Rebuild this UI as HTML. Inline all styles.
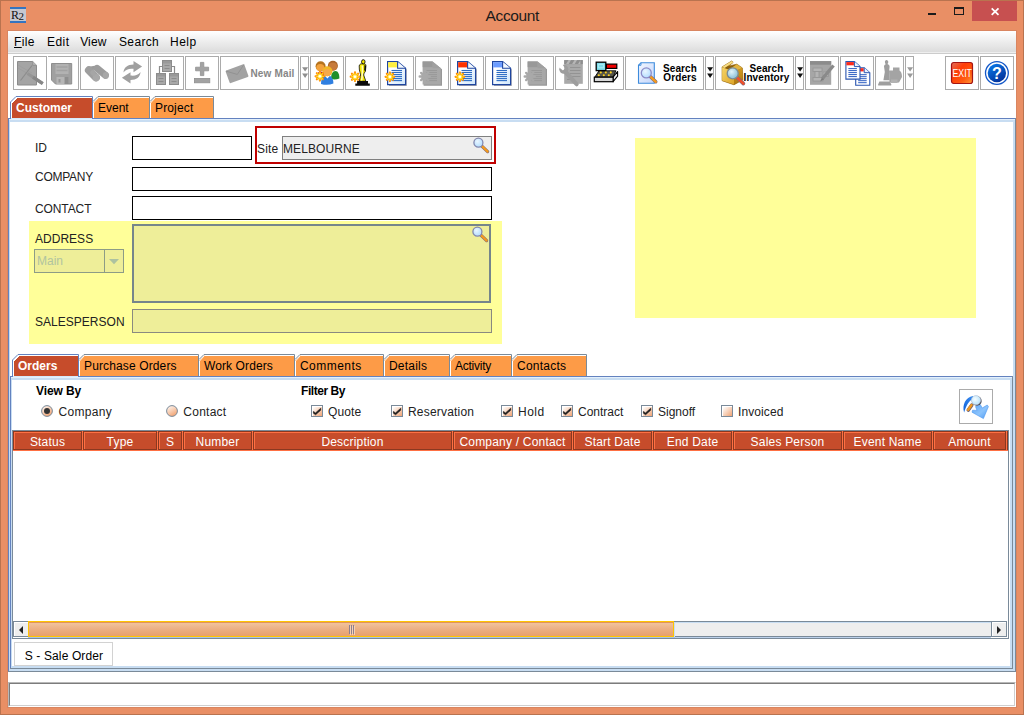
<!DOCTYPE html>
<html lang="en"><head><meta charset="utf-8"><title>Account</title>
<style>
html,body{margin:0;padding:0}
body{width:1024px;height:715px;overflow:hidden;position:relative;background:#E98F65;
 font-family:"Liberation Sans",sans-serif;font-size:12px;color:#000}
div,span,svg{position:absolute;box-sizing:border-box}
.t{white-space:nowrap;display:block}
.b{font-weight:bold}
.w{color:#fff}
.tb{border:1px solid #ABABAB;background:#fff}
svg{overflow:visible}
.hc{background:#C64C2B;border:1px solid #8A3820;box-shadow:inset 1px 1px 0 #FF7043;color:#fff;text-align:center;line-height:21px;font-size:12px;letter-spacing:0.2px;white-space:nowrap;overflow:hidden}
</style></head><body>

<div style="left:0px;top:0px;width:1024px;height:715px;border:1px solid #B9734F"></div>
<div style="left:7px;top:30px;width:1010px;height:678px;background:#D98560"></div>
<div style="left:8px;top:31px;width:1008px;height:676px;background:#fff"></div>
<div style="left:10px;top:7px;width:16px;height:16px;background:#C6C8D0;border-top:2px solid #3474C0;border-bottom:2px solid #3474C0;overflow:hidden"><span class="t" style="left:1px;top:-1px;font-family:'Liberation Serif',serif;font-size:12px;line-height:14px;letter-spacing:-0.5px;color:#111">R<span style="position:relative;top:0.5px;font-size:11px">2</span></span></div>
<span class="t" style="left:412.300px;top:3.600px;width:200px;text-align:center;font-size:15.500px;line-height:23px;color:#1b1b1b;letter-spacing:-0.35px">Account</span>
<div style="left:928px;top:13px;width:8px;height:2px;background:#1b1b1b"></div>
<div style="left:954px;top:7px;width:10px;height:8px;border:1px solid #1b1b1b;border-top-width:2px"></div>
<div style="left:972px;top:1px;width:45px;height:20px;background:#C75050"></div>
<svg style="left:990px;top:7px" width="10" height="9" viewBox="0 0 10 9"><path d="M1.7 1.4 L8.500 7.800 M8.500 1.400 L1.700 7.800" stroke="#fff" stroke-width="1.800" fill="none"/></svg>
<div style="left:8px;top:31px;width:1008px;height:21px;background:linear-gradient(#fff,#DCDCDC)"></div>
<div style="left:8px;top:52px;width:1008px;height:1px;background:#EEEEEE"></div>
<div style="left:8px;top:53px;width:1008px;height:1px;background:#CCCCCC"></div>
<span class="t" style="left:14px;top:36px;font-size:12px;line-height:12px;letter-spacing:0.4px"><span style="position:static;text-decoration:underline">F</span>ile</span>
<span class="t" style="left:47px;top:36px;font-size:12px;line-height:12px;letter-spacing:0.45px">Edit</span>
<span class="t" style="left:80.2px;top:36px;font-size:12px;line-height:12px;letter-spacing:0.15px">View</span>
<span class="t" style="left:119px;top:36px;font-size:12px;line-height:12px;letter-spacing:0.35px">Search</span>
<span class="t" style="left:170px;top:36px;font-size:12px;line-height:12px;letter-spacing:0.5px">Help</span>
<div class="tb" style="left:45px;top:56px;width:34px;height:34px"><svg style="left:0px;top:0px" width="32" height="32" viewBox="0 0 32 32"><path d="M5.500 6.500h20.200v20.500h-16.200l-4-4z" fill="#A0A0A0" stroke="#8E8E8E"/><rect x="9.5" y="7" width="13" height="10" fill="#B2B2B2"/><path d="M10.5 10h11M10.5 13.5h11" stroke="#A2A2A2" stroke-width="1.6"/><rect x="10.5" y="20" width="8" height="7" fill="#B6B6B6"/><rect x="18.800" y="20" width="3.600" height="7" fill="#8E8E8E"/><rect x="12.5" y="22" width="2" height="3.5" fill="#959595"/></svg></div>
<div class="tb" style="left:13px;top:56px;width:34px;height:34px"><svg style="left:0px;top:0px" width="32" height="32" viewBox="0 0 32 32"><path d="M3.500 4.500h15.200l3.800 3.800v19.700h-19z" fill="#A4A4A4" stroke="#8C8C8C"/><path d="M18.700 4.500v3.800h3.800" fill="#B8B8B8" stroke="#8C8C8C" stroke-width="0.800"/><path d="M4 8l14 8M4 11l12 7" stroke="#9A9A9A" stroke-width="0.6"/><path d="M18 8.5L6.5 23.5" stroke="#8C8C8C" stroke-width="1.2"/><path d="M13.5 16.5L28.5 26.5" stroke="#959595" stroke-width="3.2"/><path d="M19 20.2L28.8 26.7" stroke="#878787" stroke-width="3.4"/></svg></div>
<div style="left:47px;top:56px;width:1px;height:34px;background:#fff"></div>
<div class="tb" style="left:80px;top:56px;width:34px;height:34px"><svg style="left:0px;top:0px" width="32" height="32" viewBox="0 0 32 32"><g stroke-linecap="round" fill="none"><path d="M8 11.600L15.500 10.400" stroke="#9A9A9A" stroke-width="3.600"/><path d="M7.800 13.200L15 20.400" stroke="#9E9E9E" stroke-width="7.800"/><path d="M16.200 11.400L24.400 18.200" stroke="#9C9C9C" stroke-width="7"/></g><ellipse cx="15.200" cy="20.600" rx="3.500" ry="3.800" fill="#A9A9A9"/><ellipse cx="24.800" cy="18.400" rx="3" ry="3.400" fill="#A7A7A7"/><ellipse cx="12" cy="16" rx="2.500" ry="2.900" fill="#A6A6A6" transform="rotate(-40 12 16)"/></svg></div>
<div class="tb" style="left:115px;top:56px;width:34px;height:34px"><svg style="left:0px;top:0px" width="32" height="32" viewBox="0 0 32 32"><g fill="#A0A0A0"><path d="M17.5 4l8.6 5.6-8.6 5.6v-3.4c-4.4-.6-7.6.6-10 3.6.2-5 4-8 10-8z"/><path d="M14.5 26.4l-8.6-5.6 8.6-5.6v3.4c4.4.6 7.6-.6 10-3.6-.2 5-4 8-10 8z"/></g></svg></div>
<div class="tb" style="left:150px;top:56px;width:34px;height:34px"><svg style="left:0px;top:0px" width="32" height="32" viewBox="0 0 32 32"><path d="M8.5 16v-6.5h15v6.5" fill="none" stroke="#8C8C8C" stroke-width="1.2"/><rect x="11.5" y="3.5" width="9" height="11" fill="#A8A8A8" stroke="#8C8C8C"/><rect x="12" y="4" width="8" height="2.5" fill="#999"/><path d="M13.5 8.5h5M13.5 11.5h5" stroke="#8C8C8C" stroke-width="1"/><rect x="5.5" y="16.5" width="9" height="11" fill="#A8A8A8" stroke="#8C8C8C"/><rect x="6" y="17" width="8" height="2.5" fill="#999"/><path d="M7.5 21.5h5M7.5 24.5h5" stroke="#8C8C8C" stroke-width="1"/><rect x="18.5" y="16.5" width="9" height="11" fill="#A8A8A8" stroke="#8C8C8C"/><rect x="19" y="17" width="8" height="2.5" fill="#999"/><path d="M20.5 21.5h5M20.5 24.5h5" stroke="#8C8C8C" stroke-width="1"/></svg></div>
<div class="tb" style="left:185px;top:56px;width:34px;height:34px"><svg style="left:0px;top:0px" width="32" height="32" viewBox="0 0 32 32"><g fill="#A2A2A2" stroke="#8F8F8F" stroke-width="0.8"><path d="M14.4 5.4h3.4v4.8h4.8v3.6h-4.8v4.8h-3.4v-4.8h-4.8v-3.6h4.8z"/><rect x="8.4" y="21.4" width="15.4" height="4.4"/></g></svg></div>
<div class="tb" style="left:220px;top:56px;width:79px;height:34px"><svg style="left:0px;top:0px" width="32" height="32" viewBox="0 0 32 32"><g transform="rotate(-20 16 16.6)"><rect x="6" y="10" width="20" height="13.4" rx="1" fill="#A2A2A2"/><path d="M6.5 10.5l9.5 7 9.5-7" fill="none" stroke="#929292" stroke-width="0.9"/></g></svg><span class="t b" style="left:29.5px;top:9px;font-size:10px;line-height:16px;color:#868686;letter-spacing:0.15px">New Mail</span></div>
<div class="tb" style="left:300px;top:56px;width:9px;height:34px"><svg style="left:1px;top:10px" width="7" height="12" viewBox="0 0 7 12"><path d="M0.100 0.200h6l-3 4.400z M0.100 6.600h6l-3 4.400z" fill="#8E8E8E"/></svg></div>
<div class="tb" style="left:310px;top:56px;width:34px;height:34px"><svg style="left:0px;top:0px" width="32" height="32" viewBox="0 0 32 32"><path d="M20 22c0-5 1.6-8 4.4-8s4 3.4 4 7.4c-2.6 1.2-5.6 1.4-8.400.6z" fill="#1E8F2A"/><path d="M5.6 21c0-4 1.400-6.400 4-6.400 2 0 3.600 1.600 3.600 4.600-2 1.800-5 2.400-7.600 1.800z" fill="#C42B2B"/><circle cx="21.9" cy="8.8" r="5" fill="#A8642A"/><ellipse cx="21.9" cy="9.6" rx="4.2" ry="4" fill="#C77A3A"/><circle cx="9.6" cy="9.2" r="5" fill="#B5731E"/><ellipse cx="9.299999999999999" cy="10.5" rx="4" ry="3.6" fill="#F3A23C"/><path d="M10 27c0-5.400 2.200-8.400 6.400-8.400s6 3.400 6 8c-4 1.600-8.400 1.600-12.400.4z" fill="#2F7FE0"/><path d="M14 19l2.400 2.400 2.400-2.400z" fill="#fff"/><circle cx="16.4" cy="14.3" r="5" fill="#F2B824"/><ellipse cx="16.099999999999998" cy="15.600000000000001" rx="4" ry="3.6" fill="#F6A94A"/><path d="M4.60 19.30L13.20 19.30M5.86 16.26L11.94 22.34M8.90 15.00L8.90 23.60M11.94 16.26L5.86 22.34" stroke="#FF8C00" stroke-width="2.200" stroke-linecap="round" fill="none"/><circle cx="8.9" cy="19.3" r="2.84" fill="#FFA400"/><path d="M5.20 19.30L12.60 19.30M6.29 16.69L11.51 21.91M8.90 15.60L8.90 23.00M11.51 16.69L6.29 21.91" stroke="#FFD61E" stroke-width="1.200" stroke-linecap="round" fill="none"/><circle cx="8.9" cy="19.3" r="2.15" fill="#FFE85A"/><circle cx="8.9" cy="19.3" r="1.29" fill="#fff"/></svg></div>
<div class="tb" style="left:345px;top:56px;width:34px;height:34px"><svg style="left:0px;top:0px" width="32" height="32" viewBox="0 0 32 32"><path d="M13.200 9C13.200 7.200 15 6.700 16.400 6.800L18.400 6.800C19.700 7 20.100 8 19.900 9.400L19.400 14.200C18.800 15.400 17.800 16.200 17.700 18L19.800 24.200H13.300L14.600 18C14.400 16 13.600 14.600 13.400 13z" fill="#F5E800" stroke="#0A0A0A" stroke-width="0.800"/><path d="M18.500 7.400L20 9 19.500 14.600 18.200 13.200z" fill="#0A0A0A"/><ellipse cx="17.300" cy="4.800" rx="1.750" ry="2.100" fill="#F5E800" stroke="#0A0A0A" stroke-width="0.900"/><path d="M16.200 8.500c.4 3.500.2 9.500-.5 15" stroke="#FFFBC0" stroke-width="1.500" fill="none"/><path d="M11.100 24h10.900v2.500h1.800v2.200h-14.500v-2.200h1.800z" fill="#0A0A0A"/><path d="M4.70 19.70L13.30 19.70M5.96 16.66L12.04 22.74M9.00 15.40L9.00 24.00M12.04 16.66L5.96 22.74" stroke="#FF8C00" stroke-width="2.200" stroke-linecap="round" fill="none"/><circle cx="9" cy="19.7" r="2.84" fill="#FFA400"/><path d="M5.30 19.70L12.70 19.70M6.39 17.09L11.61 22.31M9.00 16.00L9.00 23.40M11.61 17.09L6.39 22.31" stroke="#FFD61E" stroke-width="1.200" stroke-linecap="round" fill="none"/><circle cx="9" cy="19.7" r="2.15" fill="#FFE85A"/><circle cx="9" cy="19.7" r="1.29" fill="#fff"/></svg></div>
<div class="tb" style="left:380px;top:56px;width:34px;height:34px"><svg style="left:0px;top:0px" width="32" height="32" viewBox="0 0 32 32"><defs><linearGradient id="dg1" x1="0" y1="0" x2="1" y2="1"><stop offset="0.3" stop-color="#fff"/><stop offset="1" stop-color="#CFE6FB"/></linearGradient></defs><path d="M8 6.200h9.200l8.600 6.400v16.400h-17.800z" fill="#70707C" opacity="0.600"/><path d="M6.6 4.600h10l8 6.600v16.400h-18z" fill="url(#dg1)" stroke="#1F46A0" stroke-width="1.200"/><rect x="7.2" y="5.200" width="9.200" height="5.200" fill="#FFF040"/><path d="M16.6 4.800v6.400h7.800" fill="#F4FAFF" stroke="#1F46A0" stroke-width="1.100"/><path d="M10.5 13.5h10.5" stroke="#2B6BC4" stroke-width="1.100"/><path d="M10.5 15.5h10.5" stroke="#2B6BC4" stroke-width="1.100"/><path d="M10.5 17.6h10.5" stroke="#2B6BC4" stroke-width="1.100"/><path d="M10.5 19.6h10.5" stroke="#2B6BC4" stroke-width="1.100"/><path d="M10.5 21.6h10.5" stroke="#2B6BC4" stroke-width="1.100"/><path d="M10.5 23.6h10.5" stroke="#2B6BC4" stroke-width="1.100"/><path d="M4.60 19.80L13.20 19.80M5.86 16.76L11.94 22.84M8.90 15.50L8.90 24.10M11.94 16.76L5.86 22.84" stroke="#FF8C00" stroke-width="2.200" stroke-linecap="round" fill="none"/><circle cx="8.9" cy="19.8" r="2.84" fill="#FFA400"/><path d="M5.20 19.80L12.60 19.80M6.29 17.19L11.51 22.41M8.90 16.10L8.90 23.50M11.51 17.19L6.29 22.41" stroke="#FFD61E" stroke-width="1.200" stroke-linecap="round" fill="none"/><circle cx="8.9" cy="19.8" r="2.15" fill="#FFE85A"/><circle cx="8.9" cy="19.8" r="1.29" fill="#fff"/></svg></div>
<div class="tb" style="left:415px;top:56px;width:34px;height:34px"><svg style="left:0px;top:0px" width="32" height="32" viewBox="0 0 32 32"><path d="M7.6 5.400h9.800l8.600 6.800v16.600h-18.400z" fill="#989898"/><path d="M6.6 4.400h10l8.200 6.800v16.400h-18.200z" fill="#A8A8A8"/><rect x="6.6" y="4.400" width="10" height="5.800" fill="#999"/><path d="M16.6 4.400l8.200 6.800h-8.200z" fill="#A0A0A0"/><path d="M10.5 13.5h10.500" stroke="#999" stroke-width="1"/><path d="M10.5 15.5h10.500" stroke="#999" stroke-width="1"/><path d="M10.5 17.6h10.500" stroke="#999" stroke-width="1"/><path d="M10.5 19.6h10.500" stroke="#999" stroke-width="1"/><path d="M10.5 21.6h10.500" stroke="#999" stroke-width="1"/><path d="M10.5 23.6h10.500" stroke="#999" stroke-width="1"/><path d="M3.70 19.50L13.70 19.50M5.16 15.96L12.24 23.04M8.70 14.50L8.70 24.50M12.24 15.96L5.16 23.04" stroke="#A9A9A9" stroke-width="2.400" stroke-linecap="round" fill="none"/><circle cx="8.7" cy="19.5" r="3.10" fill="#A9A9A9"/></svg></div>
<div class="tb" style="left:450px;top:56px;width:34px;height:34px"><svg style="left:0px;top:0px" width="32" height="32" viewBox="0 0 32 32"><defs><linearGradient id="dg2" x1="0" y1="0" x2="1" y2="1"><stop offset="0.3" stop-color="#fff"/><stop offset="1" stop-color="#CFE6FB"/></linearGradient></defs><path d="M8 6.200h9.200l8.600 6.400v16.400h-17.800z" fill="#70707C" opacity="0.600"/><path d="M6.6 4.600h10l8 6.600v16.400h-18z" fill="url(#dg2)" stroke="#1F46A0" stroke-width="1.200"/><rect x="7.2" y="5.200" width="9.200" height="5.200" fill="#FF3200"/><path d="M16.6 4.800v6.400h7.800" fill="#F4FAFF" stroke="#1F46A0" stroke-width="1.100"/><path d="M10.5 13.5h10.5" stroke="#2B6BC4" stroke-width="1.100"/><path d="M10.5 15.5h10.5" stroke="#2B6BC4" stroke-width="1.100"/><path d="M10.5 17.6h10.5" stroke="#2B6BC4" stroke-width="1.100"/><path d="M10.5 19.6h10.5" stroke="#2B6BC4" stroke-width="1.100"/><path d="M10.5 21.6h10.5" stroke="#2B6BC4" stroke-width="1.100"/><path d="M10.5 23.6h10.5" stroke="#2B6BC4" stroke-width="1.100"/><path d="M4.60 19.80L13.20 19.80M5.86 16.76L11.94 22.84M8.90 15.50L8.90 24.10M11.94 16.76L5.86 22.84" stroke="#FF8C00" stroke-width="2.200" stroke-linecap="round" fill="none"/><circle cx="8.9" cy="19.8" r="2.84" fill="#FFA400"/><path d="M5.20 19.80L12.60 19.80M6.29 17.19L11.51 22.41M8.90 16.10L8.90 23.50M11.51 17.19L6.29 22.41" stroke="#FFD61E" stroke-width="1.200" stroke-linecap="round" fill="none"/><circle cx="8.9" cy="19.8" r="2.15" fill="#FFE85A"/><circle cx="8.9" cy="19.8" r="1.29" fill="#fff"/></svg></div>
<div class="tb" style="left:485px;top:56px;width:34px;height:34px"><svg style="left:0px;top:0px" width="32" height="32" viewBox="0 0 32 32"><defs><linearGradient id="dg3" x1="0" y1="0" x2="1" y2="1"><stop offset="0.3" stop-color="#fff"/><stop offset="1" stop-color="#CFE6FB"/></linearGradient></defs><path d="M8 6.200h9.200l8.600 6.400v16.400h-17.800z" fill="#70707C" opacity="0.600"/><path d="M6.6 4.600h10l8 6.600v16.400h-18z" fill="url(#dg3)" stroke="#1F46A0" stroke-width="1.200"/><rect x="7.2" y="5.200" width="9.200" height="5.200" fill="#6C9CFF"/><path d="M16.6 4.800v6.400h7.800" fill="#F4FAFF" stroke="#1F46A0" stroke-width="1.100"/><path d="M10.5 13.5h10.5" stroke="#2B6BC4" stroke-width="1.100"/><path d="M10.5 15.5h10.5" stroke="#2B6BC4" stroke-width="1.100"/><path d="M10.5 17.6h10.5" stroke="#2B6BC4" stroke-width="1.100"/><path d="M10.5 19.6h10.5" stroke="#2B6BC4" stroke-width="1.100"/><path d="M10.5 21.6h10.5" stroke="#2B6BC4" stroke-width="1.100"/><path d="M10.5 23.6h10.5" stroke="#2B6BC4" stroke-width="1.100"/></svg></div>
<div class="tb" style="left:520px;top:56px;width:34px;height:34px"><svg style="left:0px;top:0px" width="32" height="32" viewBox="0 0 32 32"><path d="M7.6 5.400h9.800l8.600 6.800v16.600h-18.400z" fill="#989898"/><path d="M6.6 4.400h10l8.200 6.800v16.400h-18.200z" fill="#A8A8A8"/><rect x="6.6" y="4.400" width="10" height="5.800" fill="#999"/><path d="M16.6 4.400l8.200 6.800h-8.200z" fill="#A0A0A0"/><path d="M10.5 13.5h10.500" stroke="#999" stroke-width="1"/><path d="M10.5 15.5h10.500" stroke="#999" stroke-width="1"/><path d="M10.5 17.6h10.500" stroke="#999" stroke-width="1"/><path d="M10.5 19.6h10.500" stroke="#999" stroke-width="1"/><path d="M10.5 21.6h10.500" stroke="#999" stroke-width="1"/><path d="M10.5 23.6h10.500" stroke="#999" stroke-width="1"/><path d="M3.70 19.50L13.70 19.50M5.16 15.96L12.24 23.04M8.70 14.50L8.70 24.50M12.24 15.96L5.16 23.04" stroke="#A9A9A9" stroke-width="2.400" stroke-linecap="round" fill="none"/><circle cx="8.7" cy="19.5" r="3.10" fill="#A9A9A9"/></svg></div>
<div class="tb" style="left:555px;top:56px;width:34px;height:34px"><svg style="left:0px;top:0px" width="32" height="32" viewBox="0 0 32 32"><rect x="8.200" y="3.100" width="18.600" height="23.700" fill="#A9A9A9"/><rect x="8.200" y="3.100" width="18.600" height="4" fill="#8E8E8E"/><path d="M12.500 3.100l-2.400 4h2.600l2.400-4zM18.500 3.100l-2.400 4h2.600l2.400-4zM24.500 3.100l-2.400 4h2.300v-3z" fill="#B6B6B6"/><path d="M14 10.500h10.500M14 13.500h10.500M14 16.500h10.500M14 19.500h10.500M11 22.500h6" stroke="#939393" stroke-width="1"/><path d="M9 14.500L20.600 27.200" stroke="#9D9D9D" stroke-width="4.200" stroke-linecap="round"/><mask id="wm"><rect width="32" height="32" fill="#fff"/><path d="M9.300 11.400L4.600 4.800 1 8.600 7 13.400z" fill="#000"/></mask><circle cx="7.800" cy="12.200" r="4.500" fill="#9D9D9D" mask="url(#wm)"/></svg></div>
<div class="tb" style="left:590px;top:56px;width:34px;height:34px"><svg style="left:0px;top:0px" width="32" height="32" viewBox="0 0 32 32"><rect x="15.400" y="7.100" width="10.400" height="4.300" fill="#F00000" stroke="#000" stroke-width="1.200"/><path d="M8 13.800h16.900l-2.800 6.400h-18.300z" fill="#55554A" stroke="#000" stroke-width="0.900"/><g fill="#FFD21E"><circle cx="9.800" cy="15.400" r="1.050"/><circle cx="14.800" cy="15.400" r="1.050"/><circle cx="19.800" cy="15.400" r="1.050"/><circle cx="7.800" cy="18.200" r="1.050"/><circle cx="12.800" cy="18.200" r="1.050"/><circle cx="17.800" cy="18.200" r="1.050"/></g><path d="M22.100 20.200l4.500-5.700v4.700l-4.500 5.500z" fill="#F0F0F0" stroke="#000" stroke-width="1.100" stroke-linejoin="round"/><rect x="3.300" y="20.200" width="18.800" height="4.500" fill="#D8D8D8" stroke="#000" stroke-width="1.200"/><rect x="5.200" y="5.200" width="9.600" height="8.400" fill="#7EDDEB" stroke="#000" stroke-width="1.300"/><path d="M7.400 7.400h5.200v3.400h-5.200z" fill="none" stroke="#B8F0F6" stroke-width="0.800"/></svg></div>
<div class="tb" style="left:625px;top:56px;width:79px;height:34px"><svg style="left:0px;top:0px" width="32" height="32" viewBox="0 0 32 32"><defs><linearGradient id="sod" x1="0" y1="0" x2="1" y2="1"><stop offset="0" stop-color="#F4F8FF"/><stop offset="1" stop-color="#C2D4FA"/></linearGradient></defs><path d="M15 5.700h13.300v20.600h-15.800v-18z" fill="url(#sod)" stroke="#3D8BDC" stroke-width="1.100"/><path d="M15 5.700v2.600h-2.500" fill="none" stroke="#3D8BDC" stroke-width="0.900"/><defs><radialGradient id="mg4" cx="0.4" cy="0.35"><stop offset="0" stop-color="#EAF6FF"/><stop offset="1" stop-color="#BFE3FF"/></radialGradient></defs><path d="M24.17 19.52L29.8 24.8" stroke="#7A6A80" stroke-width="3.4" stroke-linecap="round"/><path d="M24.82 20.14L29.8 24.8" stroke="#F39A1E" stroke-width="2.4" stroke-linecap="round"/><circle cx="20.3" cy="15.9" r="5" fill="url(#mg4)" stroke="#8C8CC8" stroke-width="1.300"/></svg><span class="t b" style="left:33px;top:7px;width:42px;text-align:center;font-size:10px;line-height:9px;letter-spacing:0.1px">Search<br>Orders</span></div>
<div class="tb" style="left:705px;top:56px;width:9px;height:34px"><svg style="left:1px;top:10px" width="7" height="12" viewBox="0 0 7 12"><path d="M0.100 0.200h6l-3 4.400z M0.100 6.600h6l-3 4.400z" fill="#111"/></svg></div>
<div class="tb" style="left:715px;top:56px;width:79px;height:34px"><svg style="left:0px;top:0px" width="32" height="32" viewBox="0 0 32 32"><defs><linearGradient id="bx1" x1="0" y1="0" x2="1" y2="1"><stop offset="0" stop-color="#F6D466"/><stop offset="1" stop-color="#DCA428"/></linearGradient><linearGradient id="bx2" x1="0" y1="0" x2="0" y2="1"><stop offset="0" stop-color="#D29A20"/><stop offset="1" stop-color="#B07A10"/></linearGradient></defs><path d="M6.100 9.900L15.700 4 17.200 5.400 12.600 9 20.800 7.200 26.300 10.900 26.800 22.800 18 27.800 6.100 23.700z" fill="#8A5E0C" stroke="#9C6A0C" stroke-width="0.700" stroke-linejoin="round"/><path d="M6.100 10.300L18 14.600V27.600L6.100 23.600z" fill="url(#bx1)"/><path d="M18 14.600L26.300 11.100 26.700 22.700 18 27.600z" fill="url(#bx2)"/><path d="M6.100 9.900L15.700 4 17.200 5.400 8.600 11z" fill="#F8DE84"/><path d="M20.800 7.200L26.300 10.900 18 14.500 13 12.600z" fill="#E2B440"/><defs><radialGradient id="mg5" cx="0.4" cy="0.35"><stop offset="0" stop-color="#E4F4FA"/><stop offset="1" stop-color="#9CCBE0"/></radialGradient></defs><path d="M20.90 20.40L27.4 26.6" stroke="#7A6A80" stroke-width="3.6" stroke-linecap="round"/><path d="M21.55 21.02L27.4 26.6" stroke="#F0502A" stroke-width="2.6" stroke-linecap="round"/><circle cx="16.7" cy="16.4" r="5.5" fill="url(#mg5)" stroke="#7C8C94" stroke-width="1.300"/></svg><span class="t b" style="left:25.500px;top:7px;width:50px;text-align:center;font-size:10px;line-height:9px;letter-spacing:0.1px">Search<br>Inventory</span></div>
<div class="tb" style="left:795px;top:56px;width:9px;height:34px"><svg style="left:1px;top:10px" width="7" height="12" viewBox="0 0 7 12"><path d="M0.100 0.200h6l-3 4.400z M0.100 6.600h6l-3 4.400z" fill="#111"/></svg></div>
<div class="tb" style="left:805px;top:56px;width:34px;height:34px"><svg style="left:0px;top:0px" width="32" height="32" viewBox="0 0 32 32"><rect x="4" y="4.100" width="21.200" height="23.700" fill="#A6A6A6"/><rect x="4" y="4.100" width="21.200" height="3.600" fill="#8C8C8C"/><g fill="#B4B4B4" stroke="#959595" stroke-width="0.800"><rect x="7" y="11" width="9" height="3.500"/><rect x="9" y="14.500" width="4" height="6"/><rect x="7" y="20.500" width="10" height="3.500"/><rect x="17" y="15" width="5.500" height="4.500"/></g><path d="M27.500 8.500L16.500 21.500" stroke="#8A8A8A" stroke-width="3.400"/><path d="M15.800 20.600l-1.600 3.800 3.800-1.800z" fill="#7C7C7C"/></svg></div>
<div class="tb" style="left:840px;top:56px;width:34px;height:34px"><svg style="left:0px;top:0px" width="32" height="32" viewBox="0 0 32 32"><path d="M14.7 10.7h8.500l5.600 5v12.500h-14.100z" fill="#fff" stroke="#2B56B0" stroke-width="1.100"/><rect x="15.2" y="11.2" width="7.500" height="3.200" fill="#FF2A1A"/><path d="M23.2 10.7v5h5.600" fill="#EAF2FF" stroke="#2B56B0" stroke-width="1"/><path d="M17.2 17.7h8.500" stroke="#2B5CC0" stroke-width="1"/><path d="M17.2 19.7h8.500" stroke="#2B5CC0" stroke-width="1"/><path d="M17.2 21.7h8.500" stroke="#2B5CC0" stroke-width="1"/><path d="M17.2 23.7h8.500" stroke="#2B5CC0" stroke-width="1"/><path d="M17.2 25.7h8.500" stroke="#2B5CC0" stroke-width="1"/><path d="M4.9 4.6h8.500l5.600 5v12.500h-14.100z" fill="#fff" stroke="#2B56B0" stroke-width="1.100"/><rect x="5.4" y="5.1" width="7.500" height="3.200" fill="#FF2A1A"/><path d="M13.4 4.6v5h5.600" fill="#EAF2FF" stroke="#2B56B0" stroke-width="1"/><path d="M7.4 11.6h8.500" stroke="#2B5CC0" stroke-width="1"/><path d="M7.4 13.6h8.500" stroke="#2B5CC0" stroke-width="1"/><path d="M7.4 15.6h8.500" stroke="#2B5CC0" stroke-width="1"/><path d="M7.4 17.6h8.500" stroke="#2B5CC0" stroke-width="1"/><path d="M7.4 19.6h8.500" stroke="#2B5CC0" stroke-width="1"/></svg></div>
<div class="tb" style="left:875px;top:56px;width:29px;height:34px"><svg style="left:0px;top:0px" width="27" height="32" viewBox="0 0 27 32"><g fill="#9E9E9E"><path d="M10.400 3c1.300 0 1.900 1 1.900 2.100 0 .9-.4 1.600-.9 2 1.400.4 2.200 1.200 2.200 2.600l-.6 5.600.8 8h-6.400l1.400-8.400-.8-5.400c.1-1.300.8-2 1.800-2.300-.6-.5-.9-1.200-.9-2.100 0-1.100.6-2.100 1.500-2.100z"/><path d="M3.400 24.500h10.600l1.200 2.800v1.300h-13v-1.300z"/><path d="M13 13.500h4v-3h6.500v3c1.600 1 2.500 3 2.500 6.500l-3 5.500h-9.500z" fill="#A4A4A4"/><rect x="15" y="22.500" width="6.500" height="3.500" fill="#B2B2B2"/></g></svg></div>
<div class="tb" style="left:905px;top:56px;width:9px;height:34px"><svg style="left:1px;top:10px" width="7" height="12" viewBox="0 0 7 12"><path d="M0.100 0.200h6l-3 4.400z M0.100 6.600h6l-3 4.400z" fill="#9A9A9A"/></svg></div>
<div class="tb" style="left:945px;top:56px;width:34px;height:34px"><svg style="left:0px;top:0px" width="32" height="32" viewBox="0 0 32 32"><defs><linearGradient id="exg" x1="0" y1="0" x2="1" y2="1"><stop offset="0" stop-color="#E0705E"/><stop offset="0.350" stop-color="#FF3D08"/><stop offset="0.700" stop-color="#FF5A10"/><stop offset="1" stop-color="#FF9A38"/></linearGradient></defs><rect x="5.500" y="5.500" width="21" height="21" rx="2.200" fill="url(#exg)" stroke="#A41414" stroke-width="1.200"/><text x="16.200" y="20.200" text-anchor="middle" font-family="Liberation Sans,sans-serif" font-size="10.800" fill="#fff" textLength="19.500" lengthAdjust="spacingAndGlyphs">EXIT</text></svg></div>
<div class="tb" style="left:980px;top:56px;width:34px;height:34px"><svg style="left:0px;top:0px" width="32" height="32" viewBox="0 0 32 32"><defs><linearGradient id="hpg" x1="0.2" y1="0" x2="0.8" y2="1"><stop offset="0" stop-color="#0A78E8"/><stop offset="1" stop-color="#032C94"/></linearGradient></defs><circle cx="15.900" cy="16" r="11.400" fill="#fff" stroke="#1458C8" stroke-width="1.300"/><circle cx="15.900" cy="16" r="9.200" fill="url(#hpg)"/><text x="15.900" y="21.600" text-anchor="middle" font-family="Liberation Sans,sans-serif" font-weight="bold" font-size="16" fill="#fff">?</text></svg></div>
<div style="left:8px;top:118px;width:1008px;height:554px;background:#C8DDF2"></div>
<div style="left:8px;top:118px;width:1008px;height:1px;background:#6382BF"></div>
<div style="left:8px;top:118px;width:1px;height:554px;background:#6382BF"></div>
<div style="left:8px;top:671px;width:1008px;height:1px;background:#7A8A99"></div>
<div style="left:1015px;top:118px;width:1px;height:554px;background:#7A8A99"></div>
<div style="left:9px;top:119px;width:1006px;height:1px;background:#E3F0FC"></div>
<div style="left:10px;top:122px;width:1003px;height:547px;background:#fff"></div>
<svg style="left:10px;top:96px" width="211" height="23" viewBox="0 0 211 23" shape-rendering="crispEdges"><polygon points="2,22 2,7 7,2 82,2 82,22" fill="#C64C2B"/><polyline points="1.5,22 1.5,6.5 6.5,1.5 82,1.5" fill="none" stroke="#fff" shape-rendering="auto"/><polyline points="0.5,22 0.5,6 6,.5 82.5,.5 82.5,22" fill="none" stroke="#6382BF" shape-rendering="auto"/><polygon points="83,22 83,6.5 88.5,1 139,1 139,22" fill="#FD9B47"/><polyline points="83.5,22 83.5,7 88.5,1.5 139,1.5" fill="none" stroke="#fff" shape-rendering="auto"/><polyline points="83,5.5 88,.5 139.5,.5 139.5,22" fill="none" stroke="#7A8A99" shape-rendering="auto"/><polygon points="140,22 140,6.5 145.5,1 203,1 203,22" fill="#FD9B47"/><polyline points="140.5,22 140.5,7 145.5,1.5 203,1.5" fill="none" stroke="#fff" shape-rendering="auto"/><polyline points="140,5.5 145,.5 203.5,.5 203.5,22" fill="none" stroke="#7A8A99" shape-rendering="auto"/></svg>
<span class="t" style="left:16px;top:102px;font-size:12px;line-height:12px;font-weight:bold;color:#fff">Customer</span>
<span class="t" style="left:98px;top:102px;font-size:12px;line-height:12px;letter-spacing:0px">Event</span>
<span class="t" style="left:155px;top:102px;font-size:12px;line-height:12px;letter-spacing:0.15px">Project</span>
<div style="left:11px;top:118px;width:81px;height:1px;background:#D6E9FA"></div>
<span class="t" style="left:35px;top:142px;font-size:12px;line-height:12px;color:#222;">ID</span>
<span class="t" style="left:35px;top:171px;font-size:12px;line-height:12px;color:#222;letter-spacing:-0.25px">COMPANY</span>
<span class="t" style="left:35px;top:203px;font-size:12px;line-height:12px;color:#222;letter-spacing:-0.1px">CONTACT</span>
<div style="left:132px;top:136px;width:120px;height:24px;border:1px solid #000;background:#fff"></div>
<div style="left:132px;top:167px;width:360px;height:24px;border:1px solid #000;background:#fff"></div>
<div style="left:132px;top:196px;width:360px;height:24px;border:1px solid #000;background:#fff"></div>
<div style="left:255px;top:126px;width:241px;height:38px;border:2px solid #C00000;background:#fff"></div>
<span class="t" style="left:257px;top:143px;font-size:12px;line-height:12px;color:#222;letter-spacing:0.2px">Site</span>
<div style="left:282px;top:136px;width:210px;height:24px;border:1px solid #808080;background:#EEEEEE"></div>
<span class="t" style="left:283px;top:143px;font-size:12px;line-height:12px;color:#222;letter-spacing:0.1px">MELBOURNE</span>
<svg style="left:472px;top:137px" width="18" height="18" viewBox="0 0 18 18"><defs><radialGradient id="mg6" cx="0.4" cy="0.35"><stop offset="0" stop-color="#EAF6FF"/><stop offset="1" stop-color="#BFE3FF"/></radialGradient></defs><path d="M9.85 9.04L15.6 14.6" stroke="#7A6A80" stroke-width="3.2" stroke-linecap="round"/><path d="M10.50 9.66L15.6 14.6" stroke="#F39A1E" stroke-width="2.2" stroke-linecap="round"/><circle cx="6.4" cy="5.7" r="4.5" fill="url(#mg6)" stroke="#8388AE" stroke-width="1.300"/></svg>
<div style="left:29px;top:221px;width:473px;height:123px;background:#FFFF99"></div>
<span class="t" style="left:35px;top:233px;font-size:12px;line-height:12px;color:#222;letter-spacing:0.02px">ADDRESS</span>
<div style="left:34px;top:249px;width:90px;height:24px;border:1px solid #8D9C86;background:#EEEE99"></div>
<div style="left:104px;top:250px;width:1px;height:22px;background:#8D9C86"></div>
<span class="t" style="left:37px;top:255px;font-size:12px;line-height:12px;color:#B0C4A0">Main</span>
<svg style="left:109px;top:259px" width="10" height="6" viewBox="0 0 10 6"><path d="M0 0h10l-5 5.200z" fill="#ADC2A0"/></svg>
<div style="left:132px;top:224px;width:359px;height:79px;border:2px solid #76868B;background:#EEEE99"></div>
<svg style="left:471px;top:226px" width="18" height="18" viewBox="0 0 18 18"><defs><radialGradient id="mg6" cx="0.4" cy="0.35"><stop offset="0" stop-color="#E8FFC8"/><stop offset="1" stop-color="#C8F0B0"/></radialGradient></defs><path d="M9.85 9.04L15.6 14.6" stroke="#7A6A80" stroke-width="3.2" stroke-linecap="round"/><path d="M10.50 9.66L15.6 14.6" stroke="#F39A1E" stroke-width="2.2" stroke-linecap="round"/><circle cx="6.4" cy="5.7" r="4.5" fill="url(#mg6)" stroke="#8388AE" stroke-width="1.300"/></svg>
<span class="t" style="left:35px;top:316px;font-size:12px;line-height:12px;color:#222;letter-spacing:0.02px">SALESPERSON</span>
<div style="left:132px;top:309px;width:360px;height:24px;border:1px solid #8A8A80;background:#EEEE99"></div>
<div style="left:635px;top:138px;width:341px;height:180px;background:#FFFF99"></div>
<div style="left:10px;top:376px;width:1003px;height:293px;background:#C8DDF2"></div>
<div style="left:10px;top:376px;width:1003px;height:1px;background:#6382BF"></div>
<div style="left:10px;top:376px;width:1px;height:293px;background:#6382BF"></div>
<div style="left:10px;top:668px;width:1003px;height:1px;background:#7A8A99"></div>
<div style="left:1012px;top:376px;width:1px;height:293px;background:#7A8A99"></div>
<div style="left:11px;top:377px;width:1001px;height:1px;background:#E3F0FC"></div>
<div style="left:12px;top:380px;width:998px;height:286px;background:#fff"></div>
<svg style="left:12px;top:354px" width="582" height="23" viewBox="0 0 582 23" shape-rendering="crispEdges"><polygon points="2,22 2,7 7,2 66,2 66,22" fill="#C64C2B"/><polyline points="1.5,22 1.5,6.5 6.5,1.5 66,1.5" fill="none" stroke="#fff" shape-rendering="auto"/><polyline points="0.5,22 0.5,6 6,.5 66.5,.5 66.5,22" fill="none" stroke="#6382BF" shape-rendering="auto"/><polygon points="67,22 67,6.5 72.5,1 186,1 186,22" fill="#FD9B47"/><polyline points="67.5,22 67.5,7 72.5,1.5 186,1.5" fill="none" stroke="#fff" shape-rendering="auto"/><polyline points="67,5.5 72,.5 186.5,.5 186.5,22" fill="none" stroke="#7A8A99" shape-rendering="auto"/><polygon points="187,22 187,6.5 192.5,1 282,1 282,22" fill="#FD9B47"/><polyline points="187.5,22 187.5,7 192.5,1.5 282,1.5" fill="none" stroke="#fff" shape-rendering="auto"/><polyline points="187,5.5 192,.5 282.5,.5 282.5,22" fill="none" stroke="#7A8A99" shape-rendering="auto"/><polygon points="283,22 283,6.5 288.5,1 371,1 371,22" fill="#FD9B47"/><polyline points="283.5,22 283.5,7 288.5,1.5 371,1.5" fill="none" stroke="#fff" shape-rendering="auto"/><polyline points="283,5.5 288,.5 371.5,.5 371.5,22" fill="none" stroke="#7A8A99" shape-rendering="auto"/><polygon points="372,22 372,6.5 377.5,1 437,1 437,22" fill="#FD9B47"/><polyline points="372.5,22 372.5,7 377.5,1.5 437,1.5" fill="none" stroke="#fff" shape-rendering="auto"/><polyline points="372,5.5 377,.5 437.5,.5 437.5,22" fill="none" stroke="#7A8A99" shape-rendering="auto"/><polygon points="438,22 438,6.5 443.5,1 499,1 499,22" fill="#FD9B47"/><polyline points="438.5,22 438.5,7 443.5,1.5 499,1.5" fill="none" stroke="#fff" shape-rendering="auto"/><polyline points="438,5.5 443,.5 499.5,.5 499.5,22" fill="none" stroke="#7A8A99" shape-rendering="auto"/><polygon points="500,22 500,6.5 505.5,1 574,1 574,22" fill="#FD9B47"/><polyline points="500.5,22 500.5,7 505.5,1.5 574,1.5" fill="none" stroke="#fff" shape-rendering="auto"/><polyline points="500,5.5 505,.5 574.5,.5 574.5,22" fill="none" stroke="#7A8A99" shape-rendering="auto"/></svg>
<span class="t" style="left:18px;top:360px;font-size:12px;line-height:12px;font-weight:bold;color:#fff">Orders</span>
<span class="t" style="left:84px;top:360px;font-size:12px;line-height:12px;letter-spacing:0.13px">Purchase Orders</span>
<span class="t" style="left:204px;top:360px;font-size:12px;line-height:12px;letter-spacing:0.1px">Work Orders</span>
<span class="t" style="left:300px;top:360px;font-size:12px;line-height:12px;letter-spacing:0.45px">Comments</span>
<span class="t" style="left:389px;top:360px;font-size:12px;line-height:12px;letter-spacing:0.2px">Details</span>
<span class="t" style="left:455px;top:360px;font-size:12px;line-height:12px;letter-spacing:-0.25px">Activity</span>
<span class="t" style="left:517px;top:360px;font-size:12px;line-height:12px;letter-spacing:0.25px">Contacts</span>
<div style="left:13px;top:376px;width:65px;height:1px;background:#D6E9FA"></div>
<span class="t" style="left:36px;top:385px;font-size:12px;line-height:12px;font-weight:bold;letter-spacing:-0.1px">View By</span>
<span class="t" style="left:301px;top:385px;font-size:12px;line-height:12px;font-weight:bold;letter-spacing:-0.45px">Filter By</span>
<svg style="left:41px;top:405px" width="12" height="12" viewBox="0 0 12 12"><defs><linearGradient id="rg41" x1="0" y1="0" x2="0.6" y2="1"><stop offset="0" stop-color="#fff"/><stop offset="1" stop-color="#F2A574"/></linearGradient></defs><circle cx="6" cy="6" r="5.4" fill="url(#rg41)" stroke="#7A8A99" stroke-width="1"/><circle cx="6" cy="6" r="3" fill="#333"/></svg>
<span class="t" style="left:58.5px;top:406px;font-size:12px;line-height:12px;color:#222;letter-spacing:0.3px">Company</span>
<svg style="left:166px;top:405px" width="12" height="12" viewBox="0 0 12 12"><defs><linearGradient id="rg166" x1="0" y1="0" x2="0.6" y2="1"><stop offset="0" stop-color="#fff"/><stop offset="1" stop-color="#F2A574"/></linearGradient></defs><circle cx="6" cy="6" r="5.4" fill="url(#rg166)" stroke="#7A8A99" stroke-width="1"/></svg>
<span class="t" style="left:183.3px;top:406px;font-size:12px;line-height:12px;color:#222;letter-spacing:0.25px">Contact</span>
<svg style="left:311px;top:405px" width="12" height="12" viewBox="0 0 12 12"><defs><linearGradient id="cg311" x1="0" y1="0" x2="1" y2="1"><stop offset="0.15" stop-color="#fff"/><stop offset="1" stop-color="#EE9E6C"/></linearGradient></defs><rect x=".5" y=".5" width="11" height="11" fill="url(#cg311)" stroke="#7A8A99"/><path d="M1.500 11V1.500H11" fill="none" stroke="#fff"/><path d="M2.400 6.400 L4.500 7.900 L9.700 3.300 L9.700 5.200 L4.600 9.800 L2.400 8.200z" fill="#1c1c1c" stroke="#1c1c1c" stroke-width="0.600"/></svg>
<span class="t" style="left:328px;top:406px;font-size:12px;line-height:12px;color:#222;letter-spacing:0.1px">Quote</span>
<svg style="left:391px;top:405px" width="12" height="12" viewBox="0 0 12 12"><defs><linearGradient id="cg391" x1="0" y1="0" x2="1" y2="1"><stop offset="0.15" stop-color="#fff"/><stop offset="1" stop-color="#EE9E6C"/></linearGradient></defs><rect x=".5" y=".5" width="11" height="11" fill="url(#cg391)" stroke="#7A8A99"/><path d="M1.500 11V1.500H11" fill="none" stroke="#fff"/><path d="M2.400 6.400 L4.500 7.900 L9.700 3.300 L9.700 5.200 L4.600 9.800 L2.400 8.200z" fill="#1c1c1c" stroke="#1c1c1c" stroke-width="0.600"/></svg>
<span class="t" style="left:408px;top:406px;font-size:12px;line-height:12px;color:#222;letter-spacing:0.2px">Reservation</span>
<svg style="left:501px;top:405px" width="12" height="12" viewBox="0 0 12 12"><defs><linearGradient id="cg501" x1="0" y1="0" x2="1" y2="1"><stop offset="0.15" stop-color="#fff"/><stop offset="1" stop-color="#EE9E6C"/></linearGradient></defs><rect x=".5" y=".5" width="11" height="11" fill="url(#cg501)" stroke="#7A8A99"/><path d="M1.500 11V1.500H11" fill="none" stroke="#fff"/><path d="M2.400 6.400 L4.500 7.900 L9.700 3.300 L9.700 5.200 L4.600 9.800 L2.400 8.200z" fill="#1c1c1c" stroke="#1c1c1c" stroke-width="0.600"/></svg>
<span class="t" style="left:518px;top:406px;font-size:12px;line-height:12px;color:#222;letter-spacing:0.5px">Hold</span>
<svg style="left:561px;top:405px" width="12" height="12" viewBox="0 0 12 12"><defs><linearGradient id="cg561" x1="0" y1="0" x2="1" y2="1"><stop offset="0.15" stop-color="#fff"/><stop offset="1" stop-color="#EE9E6C"/></linearGradient></defs><rect x=".5" y=".5" width="11" height="11" fill="url(#cg561)" stroke="#7A8A99"/><path d="M1.500 11V1.500H11" fill="none" stroke="#fff"/><path d="M2.400 6.400 L4.500 7.900 L9.700 3.300 L9.700 5.200 L4.600 9.800 L2.400 8.200z" fill="#1c1c1c" stroke="#1c1c1c" stroke-width="0.600"/></svg>
<span class="t" style="left:578px;top:406px;font-size:12px;line-height:12px;color:#222;letter-spacing:0px">Contract</span>
<svg style="left:641px;top:405px" width="12" height="12" viewBox="0 0 12 12"><defs><linearGradient id="cg641" x1="0" y1="0" x2="1" y2="1"><stop offset="0.15" stop-color="#fff"/><stop offset="1" stop-color="#EE9E6C"/></linearGradient></defs><rect x=".5" y=".5" width="11" height="11" fill="url(#cg641)" stroke="#7A8A99"/><path d="M1.500 11V1.500H11" fill="none" stroke="#fff"/><path d="M2.400 6.400 L4.500 7.900 L9.700 3.300 L9.700 5.200 L4.600 9.800 L2.400 8.200z" fill="#1c1c1c" stroke="#1c1c1c" stroke-width="0.600"/></svg>
<span class="t" style="left:658px;top:406px;font-size:12px;line-height:12px;color:#222;letter-spacing:0px">Signoff</span>
<svg style="left:721px;top:405px" width="12" height="12" viewBox="0 0 12 12"><defs><linearGradient id="cg721" x1="0" y1="0" x2="1" y2="1"><stop offset="0.15" stop-color="#fff"/><stop offset="1" stop-color="#EE9E6C"/></linearGradient></defs><rect x=".5" y=".5" width="11" height="11" fill="url(#cg721)" stroke="#7A8A99"/><path d="M1.500 11V1.500H11" fill="none" stroke="#fff"/></svg>
<span class="t" style="left:738px;top:406px;font-size:12px;line-height:12px;color:#222;letter-spacing:0.1px">Invoiced</span>
<div style="left:959px;top:389px;width:34px;height:35px;border:1px solid #ABABAB;background:#fff"><svg style="left:0px;top:0px" width="32" height="32" viewBox="0 0 32 32"><defs><linearGradient id="sdg" x1="0" y1="0" x2="1" y2="1"><stop offset="0" stop-color="#5FA6F6"/><stop offset="0.55" stop-color="#8CC4FC"/><stop offset="1" stop-color="#4E9AF2"/></linearGradient><linearGradient id="sdc" x1="0" y1="1" x2="1" y2="0"><stop offset="0" stop-color="#0F62DC"/><stop offset="1" stop-color="#3C8EF0"/></linearGradient></defs><path d="M4.100 22.600C2 14.500 5.600 7.400 13 6L13.200 8.600C9.400 10.800 6.600 14.400 4.100 22.600z" fill="url(#sdc)"/><path d="M15.500 16.600L20.200 14.400 22.300 18 27.200 15 28.400 16.600 23.400 28.600 12 22.200 12.600 20.200 17 20.400z" fill="url(#sdg)" stroke="#4A96F0" stroke-width="0.600" stroke-linejoin="round"/><path d="M11.700 15.200L8.300 20" stroke="#6A6078" stroke-width="3.600" stroke-linecap="round"/><path d="M11.500 15L8.100 19.800" stroke="#F39A1E" stroke-width="2.400" stroke-linecap="round"/><defs><radialGradient id="sdl" cx="0.4" cy="0.4"><stop offset="0" stop-color="#F6FDFF"/><stop offset="1" stop-color="#C4E8FC"/></radialGradient></defs><circle cx="16.700" cy="10.900" r="4.900" fill="#3E3E48"/><circle cx="16" cy="10.200" r="4.600" fill="url(#sdl)" stroke="#B8C4D8" stroke-width="0.700"/></svg></div>
<div style="left:12px;top:430px;width:997px;height:209px;border:1px solid #7A8A99;background:#fff"></div>
<div style="left:13px;top:431px;width:995px;height:20px;background:#FF7043"></div>
<div style="left:1007px;top:431px;width:1px;height:19px;background:#8A3820"></div>
<div class="hc" style="left:13px;top:431px;width:69px;height:19px">Status</div>
<div class="hc" style="left:83px;top:431px;width:74px;height:19px">Type</div>
<div class="hc" style="left:158px;top:431px;width:24px;height:19px">S</div>
<div class="hc" style="left:183px;top:431px;width:69px;height:19px">Number</div>
<div class="hc" style="left:253px;top:431px;width:199px;height:19px">Description</div>
<div class="hc" style="left:453px;top:431px;width:119px;height:19px">Company / Contact</div>
<div class="hc" style="left:573px;top:431px;width:79px;height:19px">Start Date</div>
<div class="hc" style="left:653px;top:431px;width:79px;height:19px">End Date</div>
<div class="hc" style="left:733px;top:431px;width:109px;height:19px">Sales Person</div>
<div class="hc" style="left:843px;top:431px;width:89px;height:19px">Event Name</div>
<div class="hc" style="left:933px;top:431px;width:73px;height:19px">Amount</div>
<div style="left:13px;top:621px;width:995px;height:17px;background:#EEEEEE"></div>
<div style="left:13px;top:621px;width:995px;height:1px;background:#7A8A99"></div>
<div style="left:13px;top:636px;width:995px;height:1px;background:#7A8A99"></div>
<div style="left:13px;top:637px;width:995px;height:1px;background:#fff"></div>
<div style="left:13px;top:622px;width:995px;height:1px;background:#C8DDF2"></div>
<div style="left:13px;top:621px;width:1px;height:16px;background:#7A8A99"></div>
<div style="left:14px;top:622px;width:14px;height:14px;background:#EEEEEE;border-top:1px solid #fff;border-left:1px solid #fff"></div>
<svg style="left:19px;top:626px" width="4" height="8" viewBox="0 0 4 8"><path d="M4 0v8L0 4z" fill="#222"/></svg>
<div style="left:991px;top:622px;width:1px;height:14px;background:#7A8A99"></div>
<div style="left:992px;top:622px;width:14px;height:14px;background:#EEEEEE;border-top:1px solid #fff;border-left:1px solid #fff"></div>
<div style="left:1006px;top:622px;width:1px;height:15px;background:#7A8A99"></div>
<div style="left:1007px;top:621px;width:1px;height:17px;background:#fff"></div>
<svg style="left:997px;top:626px" width="4" height="8" viewBox="0 0 4 8"><path d="M0 0v8L4 4z" fill="#222"/></svg>
<div style="left:28px;top:621px;width:646px;height:16px;border:1px solid #FFC400;background:linear-gradient(180deg,#F2C6A2 0%,#EBB084 50%,#E8A06C 100%)"></div>
<div style="left:29px;top:622px;width:644px;height:1px;background:#E29458"></div>
<div style="left:28px;top:637px;width:647px;height:1px;background:#A9C4E6"></div>
<div style="left:675px;top:637px;width:316px;height:1px;background:#BDD2EC"></div>
<div style="left:674px;top:622px;width:1px;height:15px;background:#C8DDF2"></div>
<div style="left:349px;top:625px;width:1px;height:9px;background:#8C7F8F"></div>
<div style="left:350px;top:626px;width:1px;height:9px;background:#F8D2B4"></div>
<div style="left:351px;top:625px;width:1px;height:9px;background:#8C7F8F"></div>
<div style="left:352px;top:626px;width:1px;height:9px;background:#F8D2B4"></div>
<div style="left:353px;top:625px;width:1px;height:9px;background:#8C7F8F"></div>
<div style="left:354px;top:626px;width:1px;height:9px;background:#F8D2B4"></div>
<div style="left:14px;top:642px;width:99px;height:24px;border:1px solid #D2D2D2;background:#fff"></div>
<span class="t" style="left:24.8px;top:650px;font-size:12px;line-height:12px;letter-spacing:0.12px">S - Sale Order</span>
<div style="left:8px;top:682px;width:1008px;height:25px;border-top:1px solid #B8B8B8;border-left:1px solid #B8B8B8;border-right:1px solid #fff;border-bottom:1px solid #fff;background:#fff"></div>
<div style="left:9px;top:683px;width:1006px;height:23px;border-top:1px solid #7C7C7C;border-left:1px solid #7C7C7C;border-right:1px solid #CFCFCF;border-bottom:1px solid #CFCFCF"></div>
</body></html>
